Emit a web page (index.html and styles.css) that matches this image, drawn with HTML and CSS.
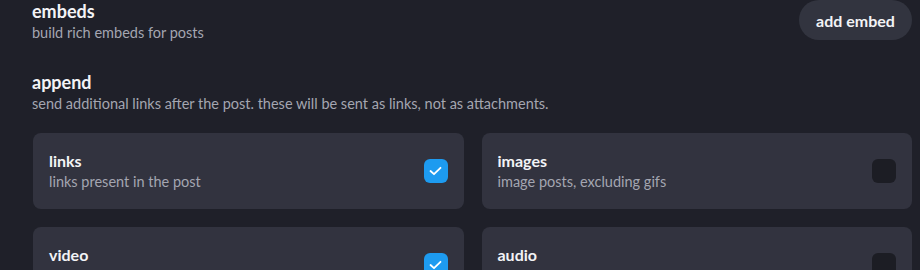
FILE: index.html
```html
<!DOCTYPE html>
<html>
<head>
<meta charset="utf-8">
<link rel="stylesheet" href="styles.css">
</head>
<body>
<div class="page">
  <section class="section header-row">
    <div class="section-text">
      <div class="section-title">embeds</div>
      <div class="section-desc">build rich embeds for posts</div>
    </div>
    <button class="pill-btn">add embed</button>
  </section>

  <section class="section append">
    <div class="section-title">append</div>
    <div class="section-desc">send additional links after the post. these will be sent as links, not as attachments.</div>
  </section>

  <div class="grid">
    <div class="card">
      <div class="card-text">
        <div class="card-title">links</div>
        <div class="card-desc">links present in the post</div>
      </div>
      <span class="check on"><svg viewBox="0 0 24 24" width="24" height="24"><polyline points="6.5,12 10,15.2 16.5,8.8" fill="none" stroke="#fff" stroke-width="1.8" stroke-linecap="round" stroke-linejoin="round"/></svg></span>
    </div>
    <div class="card">
      <div class="card-text">
        <div class="card-title">images</div>
        <div class="card-desc">image posts, excluding gifs</div>
      </div>
      <span class="check"></span>
    </div>
    <div class="card">
      <div class="card-text">
        <div class="card-title">video</div>
        <div class="card-desc">video posts</div>
      </div>
      <span class="check on"><svg viewBox="0 0 24 24" width="24" height="24"><polyline points="6.5,12 10,15.2 16.5,8.8" fill="none" stroke="#fff" stroke-width="1.8" stroke-linecap="round" stroke-linejoin="round"/></svg></span>
    </div>
    <div class="card">
      <div class="card-text">
        <div class="card-title">audio</div>
        <div class="card-desc">audio posts</div>
      </div>
      <span class="check"></span>
    </div>
  </div>
</div>
</body>
</html>
```

FILE: styles.css
```css
html, body {
  margin: 0;
  padding: 0;
  background: #1f2029;
  overflow: hidden;
}
body {
  font-family: "Lato", "Noto Sans", sans-serif;
  color: #f1f1f4;
}
.page {
  padding: 0 8px 0 32px;
}
.header-row {
  display: flex;
  justify-content: space-between;
  align-items: flex-start;
}
.section-title {
  font-size: 18px;
  font-weight: 700;
  line-height: 22px;
  color: #f3f3f6;
}
.section-desc {
  font-size: 14.5px;
  line-height: 18px;
  margin-top: 2px;
  color: #a4a6b1;
}
.pill-btn {
  font-family: inherit;
  font-size: 16px;
  font-weight: 700;
  color: #f3f3f6;
  background: #32343f;
  border: none;
  border-radius: 20px;
  height: 40px;
  padding: 0;
  width: 113px;
}
.append {
  margin-top: 29px;
}
.grid {
  margin: 20px 0 0 1px;
  display: grid;
  grid-template-columns: 1fr 1fr;
  gap: 18px;
}
.card {
  background: #32333f;
  border-radius: 8px;
  height: 76px;
  box-sizing: border-box;
  padding: 0 16px;
  display: flex;
  align-items: center;
  justify-content: space-between;
}
.card-title {
  font-size: 16px;
  font-weight: 700;
  line-height: 22px;
  color: #f3f3f6;
}
.card-desc {
  font-size: 14.5px;
  line-height: 20px;
  color: #a4a6b1;
}
.check {
  width: 24px;
  height: 24px;
  border-radius: 6px;
  background: #1c1d24;
  display: block;
}
.check.on {
  background: #1d9bf0;
}
.check svg {
  display: block;
}
```
